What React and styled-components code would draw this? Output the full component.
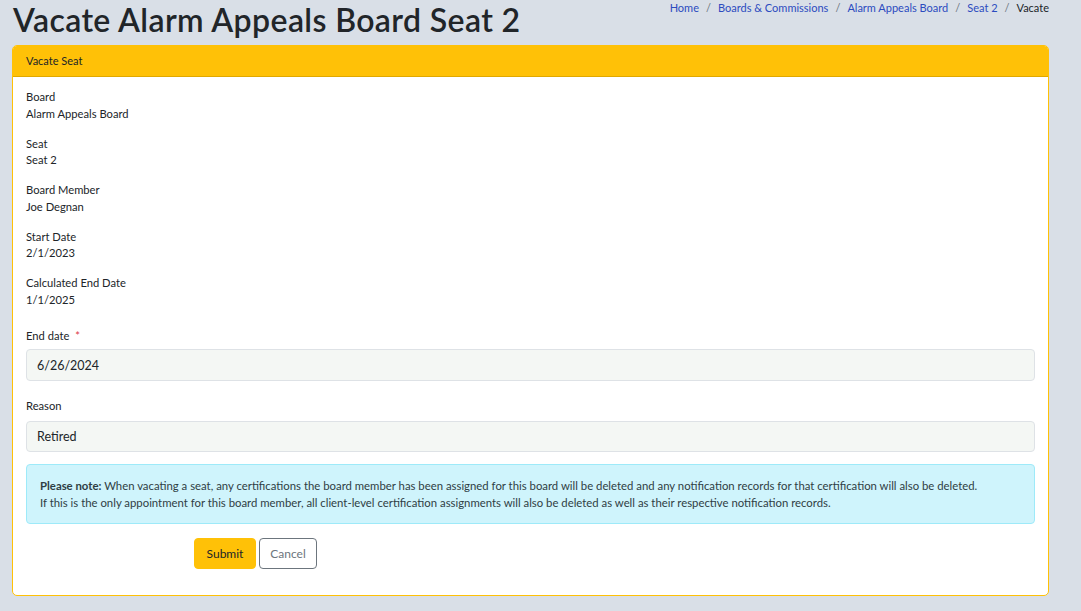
import React from "react";
import styled, { createGlobalStyle } from "styled-components";

const Global = createGlobalStyle`
  html, body { margin: 0; padding: 0; background: #d9dfe7; }
  body { font-family: "Lato", "Liberation Sans", sans-serif; color: #212529; }
  * { box-sizing: border-box; }
`;

const Page = styled.div`
  padding: 0 32px 15px 12px;
  min-height: 611px;
`;

const TopBar = styled.div`
  display: flex;
  justify-content: space-between;
  align-items: flex-start;
  height: 45px;
`;

const Title = styled.h1`
  margin: 0;
  padding-left: 1px;
  font-size: 32px;
  line-height: 40px;
  font-weight: 600;
  color: #212529;
  letter-spacing: 0.38px;
`;

const Crumbs = styled.nav`
  display: flex;
  align-items: center;
  font-size: 11px;
  line-height: 16px;
`;

const Crumb = styled.a`
  color: ${(p) => (p.$active ? "#212529" : "#2c4bbf")};
  text-decoration: none;
`;

const Sep = styled.span`
  color: #6c757d;
  padding: 0 7px;
`;

const Card = styled.section`
  background: #fff;
  border: 1px solid #ffc107;
  border-radius: 5px;
  overflow: hidden;
`;

const CardHeader = styled.header`
  background: #ffc107;
  border-bottom: 1px solid #e0a800;
  height: 31px;
  padding: 0 13px 1px;
  display: flex;
  align-items: center;
  font-size: 11px;
  color: #212529;
`;

const CardBody = styled.div`
  padding: 12px 13px 26px;
`;

const Field = styled.div`
  margin-bottom: 13.5px;
  font-size: 11.2px;
  line-height: 16.5px;
`;

const Label = styled.div`
  color: #212529;
`;

const Value = styled.div`
  color: #212529;
`;

const FormGroup = styled.div`
  margin-top: ${(p) => p.$top || "0px"};
`;

const FormLabel = styled.label`
  display: block;
  font-size: 11.2px;
  line-height: 17px;
  margin-bottom: ${(p) => p.$gap || "5px"};
`;

const Req = styled.span`
  color: #dc3545;
  margin-left: 6px;
`;

const Input = styled.div`
  height: ${(p) => p.$h || "32px"};
  background: #f4f7f4;
  border: 1px solid #dee2e6;
  border-radius: 4px;
  padding: 0 10px;
  display: flex;
  align-items: center;
  font-size: 12.5px;
  color: #212529;
`;

const Alert = styled.div`
  margin-top: 12px;
  background: #cff4fc;
  border: 1px solid #9eeaf9;
  border-radius: 4px;
  padding: 12px 13px 12px;
  font-size: 11.35px;
  line-height: 17px;
  color: #2f3e44;
`;

const Actions = styled.div`
  display: flex;
  gap: 3px;
  margin-top: 14px;
  padding-left: 168px;
`;

const Button = styled.button`
  height: 31px;
  padding: 0 10px;
  border-radius: 4px;
  font-family: inherit;
  font-size: 12px;
  font-weight: 400;
  cursor: pointer;
  border: 1px solid ${(p) => (p.$variant === "primary" ? "#ffc107" : "#6c757d")};
  background: ${(p) => (p.$variant === "primary" ? "#ffc107" : "#fff")};
  color: ${(p) => (p.$variant === "primary" ? "#212529" : "#6c757d")};
  width: ${(p) => p.$w};
`;

const details = [
  ["Board", "Alarm Appeals Board"],
  ["Seat", "Seat 2"],
  ["Board Member", "Joe Degnan"],
  ["Start Date", "2/1/2023"],
  ["Calculated End Date", "1/1/2025"],
];

const crumbs = ["Home", "Boards & Commissions", "Alarm Appeals Board", "Seat 2"];

export default function App() {
  return (
    <>
      <Global />
      <Page>
        <TopBar>
          <Title>Vacate Alarm Appeals Board Seat 2</Title>
          <Crumbs>
            {crumbs.map((c) => (
              <React.Fragment key={c}>
                <Crumb href="#">{c}</Crumb>
                <Sep>/</Sep>
              </React.Fragment>
            ))}
            <Crumb $active>Vacate</Crumb>
          </Crumbs>
        </TopBar>
        <Card>
          <CardHeader>Vacate Seat</CardHeader>
          <CardBody>
            {details.map(([l, v]) => (
              <Field key={l}>
                <Label>{l}</Label>
                <Value>{v}</Value>
              </Field>
            ))}
            <FormGroup $top="19px">
              <FormLabel>
                End date<Req>*</Req>
              </FormLabel>
              <Input>6/26/2024</Input>
            </FormGroup>
            <FormGroup $top="16px">
              <FormLabel $gap="7px">Reason</FormLabel>
              <Input $h="31px">Retired</Input>
            </FormGroup>
            <Alert>
              <div>
                <strong>Please note:</strong> When vacating a seat, any certifications the board member has been
                assigned for this board will be deleted and any notification records for that certification will
                also be deleted.
              </div>
              <div>
                If this is the only appointment for this board member, all client-level certification assignments
                will also be deleted as well as their respective notification records.
              </div>
            </Alert>
            <Actions>
              <Button $variant="primary" $w="62px">Submit</Button>
              <Button $w="58px">Cancel</Button>
            </Actions>
          </CardBody>
        </Card>
      </Page>
    </>
  );
}
